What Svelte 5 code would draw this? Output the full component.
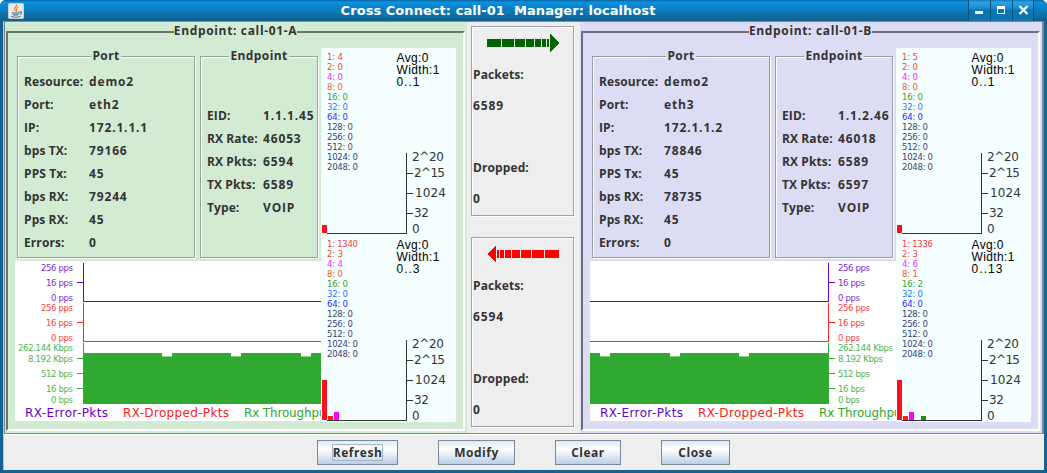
<script>
  const violet = '#6600cc';
  const red = '#ff2020';
  const green = '#30a930';
  const binNames = [1, 2, 4, 8, 16, 32, 64, 128, 256, 512, 1024, 2048];
  const binColors = ['#ff1020', '#ff2000', '#ff00ff', '#f04000', '#209000', '#0060ff', '#0000ff', '#102060', '#102060', '#102060', '#102060', '#102060'];
  const binWidths = { 4: 16, 5: 21, 6: 26, 7: 31 };

  const endpoints = [
    {
      id: 'a',
      name: 'call-01-A',
      port: [['Resource:', 'demo2'], ['Port:', 'eth2'], ['IP:', '172.1.1.1'], ['bps TX:', '79166'], ['PPS Tx:', '45'], ['bps RX:', '79244'], ['Pps RX:', '45'], ['Errors:', '0']],
      info: [['EID:', '1.1.1.45'], ['RX Rate:', '46053'], ['RX Pkts:', '6594'], ['TX Pkts:', '6589'], ['Type:', 'VOIP']],
      axis: 68, from: 68, to: 306, tick: 62, labelX: 58, anchor: 'end',
      dips: [147, 216, 286],
      histograms: [
        { bins: [4, 0, 0, 0, 0], heights: [8, 0, 0, 0, 0], range: '0..1', rangeWidth: 23 },
        { bins: [1340, 3, 4, 0, 0], heights: [40, 4, 8, 0, 0], range: '0..3', rangeWidth: 23 }
      ]
    },
    {
      id: 'b',
      name: 'call-01-B',
      port: [['Resource:', 'demo2'], ['Port:', 'eth3'], ['IP:', '172.1.1.2'], ['bps TX:', '78846'], ['PPS Tx:', '45'], ['bps RX:', '78735'], ['Pps RX:', '45'], ['Errors:', '0']],
      info: [['EID:', '1.1.2.46'], ['RX Rate:', '46018'], ['RX Pkts:', '6589'], ['TX Pkts:', '6597'], ['Type:', 'VOIP']],
      axis: 238, from: 0, to: 239, tick: 239, labelX: 248, anchor: 'start',
      dips: [10, 80, 149],
      histograms: [
        { bins: [5, 0, 0, 0, 0], heights: [8, 0, 0, 0, 0], range: '0..1', rangeWidth: 23 },
        { bins: [1336, 3, 6, 1, 2], heights: [40, 4, 8, 0, 4], range: '0..13', rangeWidth: 31 }
      ]
    }
  ];

  const scale = [
    ['256 pps', 10.3, 32, violet], ['16 pps', 25.3, 27, violet], ['0 pps', 40.3, 22, violet],
    ['256 pps', 50.3, 32, red], ['16 pps', 65.3, 27, red], ['0 pps', 80.3, 22, red],
    ['262.144 Kbps', 90.3, 55, green], ['8.192 Kbps', 101.3, 45, green], ['512 bps', 116.3, 32, green], ['16 bps', 131.3, 27, green], ['0 bps', 142.3, 22, green]
  ];
  const ticks = [[21, violet], [61, red], [97, green], [112, green], [127, green]];

  const flows = [
    { packets: '6589', dropped: '0', color: '#006400', reverse: false },
    { packets: '6594', dropped: '0', color: '#ff0000', reverse: true }
  ];
  const dashes = [[0, 14], [15, 12], [28, 10], [39, 8], [48, 6], [55, 4], [60, 2]];
  const buttons = [['Refresh', 81], ['Modify', 77], ['Clear', 66], ['Close', 69]];
</script>

{#snippet rows(items)}
  <div class="rows">
    {#each items as [label, value]}
      <div class="row"><span class="key">{label}</span><span class="value">{value}</span></div>
    {/each}
  </div>
{/snippet}

{#snippet chart(e)}
  <svg class="chart" width="306" height="160" viewBox="0 0 306 160">
    <g shape-rendering="crispEdges">
      <rect width="306" height="160" fill="#fff" />
      <rect x={e.axis} y="2" width="1" height="39" fill={violet} />
      <rect x={e.from} y="40" width={e.to - e.from} height="1" fill={violet} />
      <rect x={e.axis} y="42" width="1" height="39" fill={red} />
      <rect x={e.from} y="80" width={e.to - e.from} height="1" fill={red} />
      <rect x={e.axis} y="82" width="1" height="61" fill={green} />
      <rect x={e.from} y="92" width={e.to - e.from} height="51" fill={green} />
      {#each e.dips as x}
        <rect {x} y="92" width="10" height="3" fill="#fff" />
        <rect {x} y="95" width="10" height="1" fill="#8fd08f" />
      {/each}
      {#each ticks as [y, color]}
        <rect x={e.tick} {y} width="6" height="1" fill={color} />
      {/each}
    </g>
    {#each scale as [text, y, width, color]}
      <text class="tiny" x={e.labelX} {y} fill={color} text-anchor={e.anchor} textLength={width}>{text}</text>
    {/each}
    <text class="plain" x="10" y="156" fill={violet} textLength="83">RX-Error-Pkts</text>
    <text class="plain" x="108" y="156" fill={red} textLength="106">RX-Dropped-Pkts</text>
    <text class="plain" x="229" y="156" fill={green} textLength="87">Rx Throughput</text>
  </svg>
{/snippet}

{#snippet histogram(h)}
  <svg width="135" height="187" viewBox="0 0 135 187">
    <rect width="135" height="187" fill="#f5ffff" />
    {#each binNames as name, i}
      {@const text = `${name}: ${h.bins[i] ?? 0}`}
      <text class="tiny" x="6" y={12.3 + i * 10} fill={binColors[i]} textLength={binWidths[text.length]}>{text}</text>
    {/each}
    <text class="note" x="75.5" y="14" textLength="32">Avg:0</text>
    <text class="note" x="75.5" y="26" textLength="43">Width:1</text>
    <text class="note" x="75.5" y="38" textLength={h.rangeWidth}>{h.range}</text>
    <g fill="#333" shape-rendering="crispEdges">
      <rect x="6" y="185" width="80" height="1" />
      <rect x="85" y="105" width="1" height="81" />
      <rect x="85" y="125" width="7" height="1" />
      <rect x="85" y="145" width="7" height="1" />
      <rect x="85" y="165" width="7" height="1" />
      {#each h.heights as height, i}
        <rect x={1 + i * 6} y={185 - height} width="5" {height} fill={binColors[i]} />
      {/each}
    </g>
    <g class="plain" fill="#333">
      <text x="91" y="113" textLength="32">2^20</text>
      <text x="93" y="129" textLength="31">2^15</text>
      <text x="94" y="149" textLength="31">1024</text>
      <text x="93" y="169" textLength="15">32</text>
      <text x="91" y="185">0</text>
    </g>
  </svg>
{/snippet}

<div class="window">
  <header>
    <svg class="logo" width="16" height="16" viewBox="0 0 16 16">
      <rect x=".5" y=".5" width="15" height="15" rx="1" fill="#e9e9e9" stroke="#cfcfcf" />
      <path d="M8.5 1.5C9.5 4 4.5 5 7.500 8.300M10.500 4C7 5.500 9.800 6.700 8.300 8.800" fill="none" stroke="#f08020" stroke-width="1.2" />
      <path d="M4 9.500c1.500.9 5.500.9 7.500 0M4.500 11.300c1.500.8 4.500.8 6 0M3 13.300c2.500 1 7 1 9.500 0M11.500 9c3-.8 2.500 2 0 2.500" fill="none" stroke="#4a7696" stroke-width="1.1" />
    </svg>
    <h1>Cross Connect: call-01  Manager: localhost</h1>
    <div class="controls">
      <span><svg width="21" height="20"><path d="M6 11h8v3H6z" fill="#fff" /></svg></span>
      <span><svg width="21" height="20"><path d="M6 6h8v8H6zM7 9v4h6V9z" fill="#fff" fill-rule="evenodd" /></svg></span>
      <span><svg width="21" height="20"><path d="M6.500 6l8 8m0-8l-8 8" stroke="#fff" stroke-width="2.300" /></svg></span>
    </div>
  </header>

  <div class="client">
    <main>
      {#snippet endpoint(e)}
        <section class="panel {e.id}">
          <fieldset class="bevel">
            <legend>Endpoint: {e.name}</legend>
            <div class="columns">
              <div class="details">
                <div class="groups">
                  <fieldset class="group port"><legend>Port</legend>{@render rows(e.port)}</fieldset>
                  <fieldset class="group info"><legend>Endpoint</legend>{@render rows(e.info)}</fieldset>
                </div>
                {@render chart(e)}
              </div>
              <div class="histograms">
                {#each e.histograms as h}{@render histogram(h)}{/each}
              </div>
            </div>
          </fieldset>
        </section>
      {/snippet}

      {@render endpoint(endpoints[0])}
      <div class="flows">
        {#each flows as f}
          <div class="flow">
            <svg class:reverse={f.reverse} width="72" height="19" viewBox="0 0 72 19" shape-rendering="crispEdges" fill={f.color}>
              {#each dashes as [x, width]}<rect {x} y="5" {width} height="8" />{/each}
              <path d="M63 0l9 9-9 9z" />
            </svg>
            <span>Packets:</span>
            <span class="value">{f.packets}</span>
            <span class="dropped">Dropped:</span>
            <span class="value">{f.dropped}</span>
          </div>
        {/each}
      </div>
      {@render endpoint(endpoints[1])}
    </main>
    <footer>
      {#each buttons as [label, width], i}
        <button style:width="{width}px"><span class:focused={i === 0}>{label}</span></button>
      {/each}
    </footer>
  </div>
</div>

<style>
  :global(body) { margin: 0; overflow: hidden; background: #fff; }
  * { box-sizing: border-box; }
  svg { display: block; flex: none; }
  .window {
    width: 1047px; height: 473px; padding: 0 3px 3px; display: flex; flex-direction: column;
    background: #13628f; border-radius: 6px 6px 0 0; overflow: hidden;
    font: 700 12px/15px "Open Sans", "Noto Sans", sans-serif; letter-spacing: .1px; color: #333;
  }
  header {
    height: 21px; flex: none; margin: 0 -3px; padding: 0 13px 0 8px; display: flex;
    align-items: center;
    background: linear-gradient(#075d91 0, #0793e5 2px, #0789d5 5px, #135f8b 21px);
  }
  .logo { margin-top: 1px; }
  h1 { flex: 1; margin: 0 0 0 4px; text-align: center; white-space: pre; color: #fff; font: bold 13px/20px "DejaVu Sans", sans-serif; letter-spacing: .05px; }
  .controls { display: flex; height: 21px; }
  .controls span { width: 22px; border-left: 1px solid #075078; background: linear-gradient(#0f77b5 0, #2da2e8 2px, #1688ca 9px, #0875b5 10px, #1474aa); }
  .controls span:last-child { border-right: 1px solid #075078; }
  .client { width: 1041px; height: 449px; display: flex; flex-direction: column; background: #eee; border-left: 1px solid #b8c4cc; }
  main {
    height: 413px; flex: none; display: flex; justify-content: space-between;
    border: 1px solid #7a8a99; border-width: 1px 2px 1px 1px; box-shadow: 0 1px #fff;
  }
  .panel { width: 462px; height: 411px; padding: 1px 2px 0 1px; }
  .a { --bg: #d3ebd3; --line: #94a594; --dark: #6a766a; background: var(--bg); }
  .b { --bg: #dcdcf4; --line: #9a9aab; --dark: #6e6e7a; background: var(--bg); }
  fieldset { min-width: 0; margin: 0; padding: 0; border: 0; }
  legend { margin: 0 auto; padding: 0 1px; height: 15px; line-height: 14px; background: var(--bg); white-space: nowrap; letter-spacing: .4px; }
  .bevel { height: 408px; border: 2px solid; border-color: var(--dark) #fff #fff var(--dark); }
  .bevel > legend { height: 17px; line-height: 16px; padding: 0; letter-spacing: .65px; }
  .columns { display: flex; padding: 8px 0 0 7px; }
  .details { width: 306px; }
  .groups { display: flex; gap: 5px; padding: 1px 0 3px 2px; }
  .group { height: 209px; border: 1px solid var(--line); box-shadow: 1px 1px #fff, inset 1px 1px #fff; }
  .port { width: 178px; --key: 65px; }
  .info { width: 118px; --key: 56px; }
  .port .rows { padding: 6px 0 0 6px; }
  .info .rows { padding: 40px 0 0 6px; }
  .row { height: 23px; display: grid; grid-template-columns: var(--key) 1fr; align-items: center; white-space: nowrap; }
  .value { letter-spacing: .85px; }
  .flows { width: 103px; height: 402px; margin: 4px 2px 0 0; display: flex; flex-direction: column; gap: 21px; }
  .flow {
    height: 190px; display: flex; flex-direction: column; padding: 8px 0 0 1px;
    border: 1px solid #a0a0a0; box-shadow: 1px 1px #fff, inset 1px 1px #fff; row-gap: 16px;
  }
  .flow svg { margin: -1px 0 -2px 14px; }
  .reverse { transform: scaleX(-1); }
  .dropped { margin-top: 31px; }
  footer { flex: 1; display: flex; gap: 40px; padding: 6px 0 0 313px; }
  button {
    height: 25px; padding: 0; display: flex; justify-content: center; align-items: center;
    border: 1px solid #7a8a99; background: linear-gradient(#dde8f3, #fff 35%, #e4edf5 60%, #b8cfe5);
    font: 700 12px/15px "Open Sans", "Noto Sans", sans-serif; letter-spacing: .5px; color: #333;
  }
  .focused { border: 1px solid #a3b8cc; }
  .tiny { font: 400 8.5px "DejaVu Sans", sans-serif; letter-spacing: 0; opacity: .85; }
  .plain { font: 400 12px "DejaVu Sans", sans-serif; letter-spacing: 0; }
  .note { font: 400 12px "Liberation Sans", sans-serif; letter-spacing: 0; fill: #000; }
</style>
